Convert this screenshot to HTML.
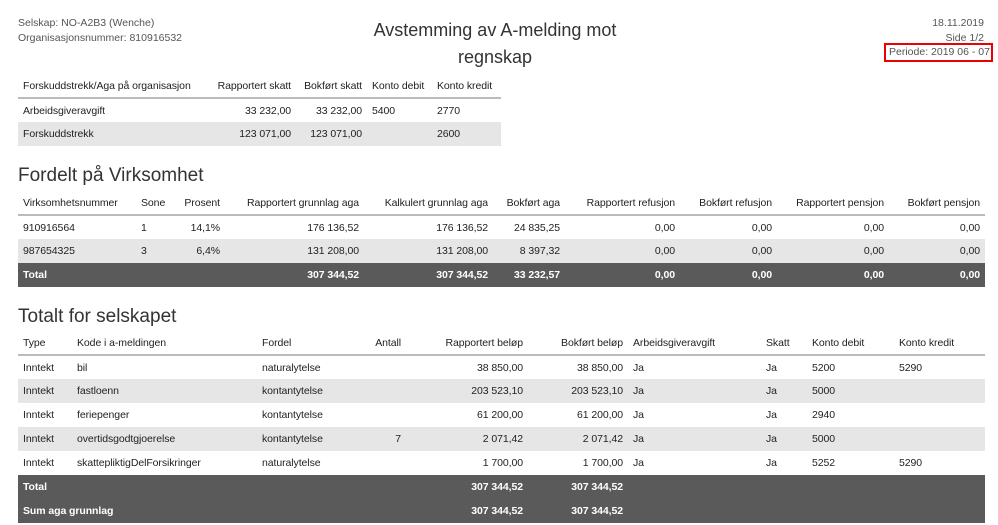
<!DOCTYPE html>
<html><head><meta charset="utf-8"><style>
*{margin:0;padding:0;box-sizing:border-box}
body{width:998px;height:525px;background:#fff;font-family:"Liberation Sans",Arial,sans-serif;color:#222;position:relative;overflow:hidden;font-size:10.5px}
.a{position:absolute;white-space:nowrap}
table{position:absolute;border-collapse:collapse;table-layout:fixed;font-size:10.5px;letter-spacing:-0.08px}
td{padding:0 5px;height:24px;white-space:nowrap;overflow:visible}
tr.h td{height:23px;border-bottom:2px solid #bbb;vertical-align:middle}
tr.g td{background:#e6e6e6}
tr.d td{background:#5a5a5a;color:#fff;font-weight:bold}
.r{text-align:right}
h2{position:absolute;font-weight:normal;font-size:19px;color:#333;left:18px}
</style></head><body>
<div class="a" style="left:18px;top:16px;color:#555;line-height:15px">Selskap: NO-A2B3 (Wenche)<br>Organisasjonsnummer: 810916532</div>
<div class="a" style="left:345px;width:300px;top:17px;text-align:center;font-size:18px;line-height:27px;color:#333;white-space:normal">Avstemming av A-melding mot regnskap</div>
<div class="a" style="right:14px;top:16px;text-align:right;color:#555;line-height:15px">18.11.2019<br>Side 1/2</div>
<div class="a" style="left:884px;width:109px;top:43px;height:19px;border:2px solid #e00;color:#555;line-height:15px;padding-left:3px">Periode: 2019 06 - 07</div>

<table style="left:18px;top:75px;width:483px">
<col style="width:192px"><col style="width:86px"><col style="width:71px"><col style="width:65px"><col style="width:69px">
<tr class="h"><td>Forskuddstrekk/Aga på organisasjon</td><td class="r">Rapportert skatt</td><td class="r">Bokført skatt</td><td>Konto debit</td><td>Konto kredit</td></tr>
<tr><td>Arbeidsgiveravgift</td><td class="r">33 232,00</td><td class="r">33 232,00</td><td>5400</td><td>2770</td></tr>
<tr class="g"><td>Forskuddstrekk</td><td class="r">123 071,00</td><td class="r">123 071,00</td><td></td><td>2600</td></tr>
</table>

<h2 style="top:165px">Fordelt på Virksomhet</h2>
<table style="left:18px;top:192px;width:967px">
<col style="width:118px"><col style="width:28px"><col style="width:61px"><col style="width:139px"><col style="width:129px"><col style="width:72px"><col style="width:115px"><col style="width:97px"><col style="width:112px"><col style="width:96px">
<tr class="h"><td>Virksomhetsnummer</td><td>Sone</td><td class="r">Prosent</td><td class="r">Rapportert grunnlag aga</td><td class="r">Kalkulert grunnlag aga</td><td class="r">Bokført aga</td><td class="r">Rapportert refusjon</td><td class="r">Bokført refusjon</td><td class="r">Rapportert pensjon</td><td class="r">Bokført pensjon</td></tr>
<tr><td>910916564</td><td>1</td><td class="r">14,1%</td><td class="r">176 136,52</td><td class="r">176 136,52</td><td class="r">24 835,25</td><td class="r">0,00</td><td class="r">0,00</td><td class="r">0,00</td><td class="r">0,00</td></tr>
<tr class="g"><td>987654325</td><td>3</td><td class="r">6,4%</td><td class="r">131 208,00</td><td class="r">131 208,00</td><td class="r">8 397,32</td><td class="r">0,00</td><td class="r">0,00</td><td class="r">0,00</td><td class="r">0,00</td></tr>
<tr class="d"><td>Total</td><td></td><td></td><td class="r">307 344,52</td><td class="r">307 344,52</td><td class="r">33 232,57</td><td class="r">0,00</td><td class="r">0,00</td><td class="r">0,00</td><td class="r">0,00</td></tr>
</table>

<h2 style="top:306px">Totalt for selskapet</h2>
<table style="left:18px;top:332px;width:967px">
<col style="width:54px"><col style="width:185px"><col style="width:83px"><col style="width:66px"><col style="width:122px"><col style="width:100px"><col style="width:133px"><col style="width:46px"><col style="width:87px"><col style="width:91px">
<tr class="h"><td>Type</td><td>Kode i a-meldingen</td><td>Fordel</td><td class="r">Antall</td><td class="r">Rapportert beløp</td><td class="r">Bokført beløp</td><td>Arbeidsgiveravgift</td><td>Skatt</td><td>Konto debit</td><td>Konto kredit</td></tr>
<tr><td>Inntekt</td><td>bil</td><td>naturalytelse</td><td></td><td class="r">38 850,00</td><td class="r">38 850,00</td><td>Ja</td><td>Ja</td><td>5200</td><td>5290</td></tr>
<tr class="g"><td>Inntekt</td><td>fastloenn</td><td>kontantytelse</td><td></td><td class="r">203 523,10</td><td class="r">203 523,10</td><td>Ja</td><td>Ja</td><td>5000</td><td></td></tr>
<tr><td>Inntekt</td><td>feriepenger</td><td>kontantytelse</td><td></td><td class="r">61 200,00</td><td class="r">61 200,00</td><td>Ja</td><td>Ja</td><td>2940</td><td></td></tr>
<tr class="g"><td>Inntekt</td><td>overtidsgodtgjoerelse</td><td>kontantytelse</td><td class="r">7</td><td class="r">2 071,42</td><td class="r">2 071,42</td><td>Ja</td><td>Ja</td><td>5000</td><td></td></tr>
<tr><td>Inntekt</td><td>skattepliktigDelForsikringer</td><td>naturalytelse</td><td></td><td class="r">1 700,00</td><td class="r">1 700,00</td><td>Ja</td><td>Ja</td><td>5252</td><td>5290</td></tr>
<tr class="d"><td colspan="2">Total</td><td></td><td></td><td class="r">307 344,52</td><td class="r">307 344,52</td><td></td><td></td><td></td><td></td></tr>
<tr class="d"><td colspan="2">Sum aga grunnlag</td><td></td><td></td><td class="r">307 344,52</td><td class="r">307 344,52</td><td></td><td></td><td></td><td></td></tr>
</table>
</body></html>
